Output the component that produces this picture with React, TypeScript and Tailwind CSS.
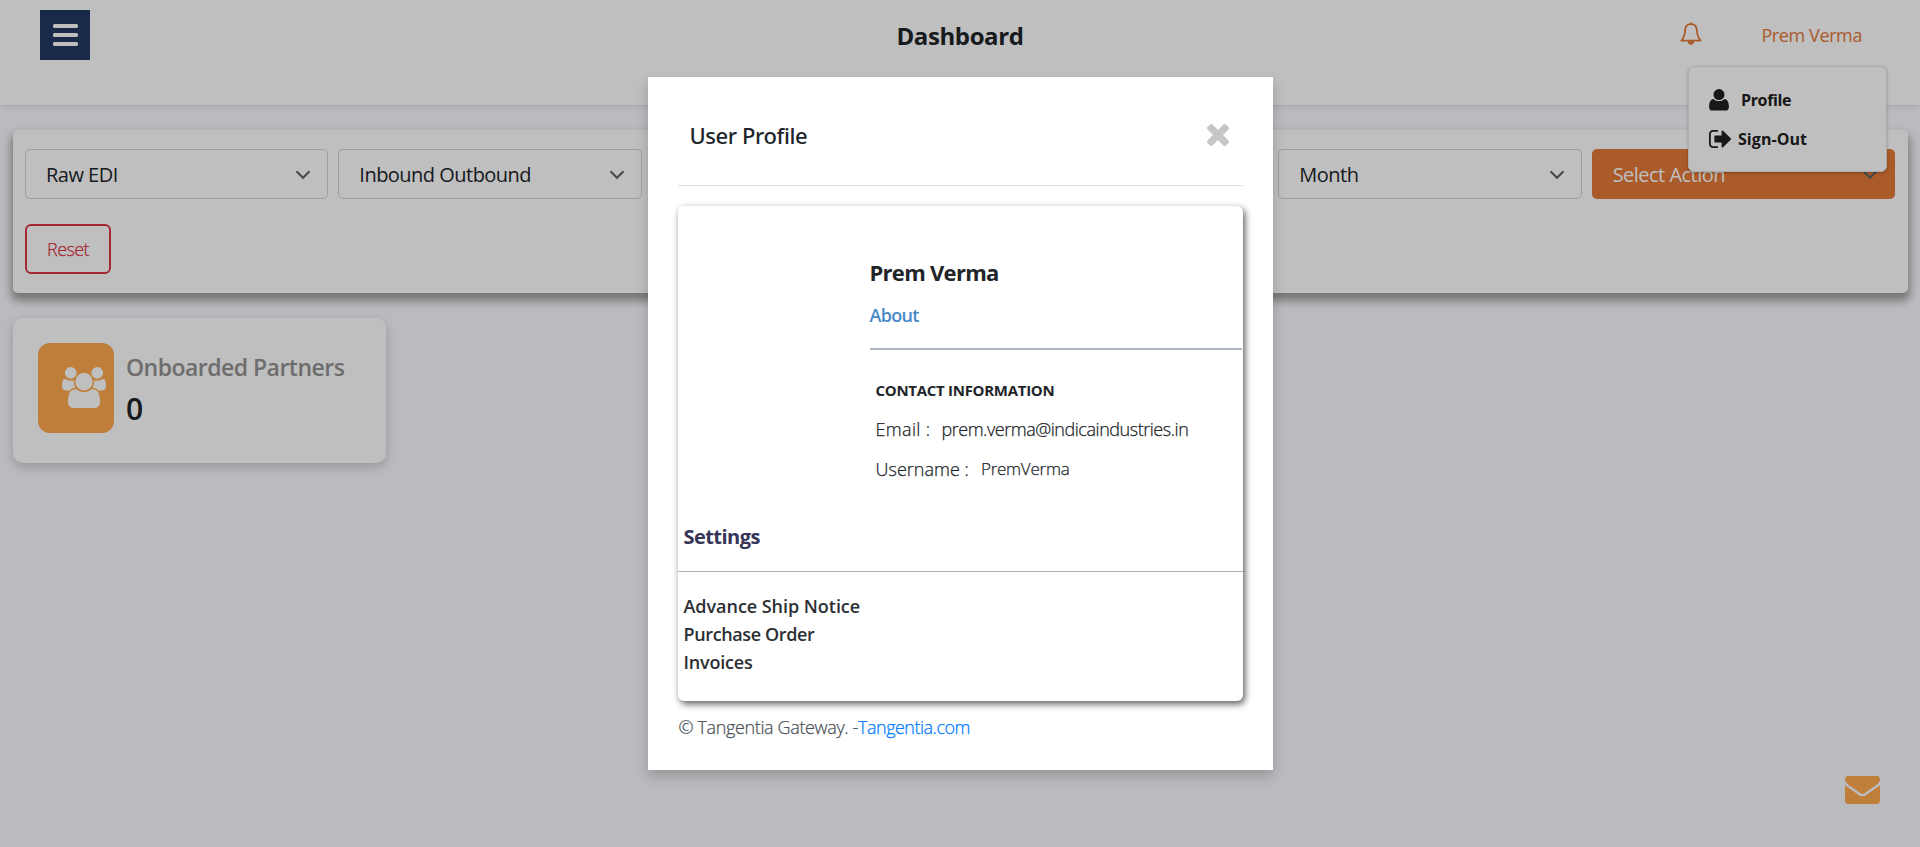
import type { ReactNode } from "react";

type GlyphProps = { d: string; viewBox: string; className: string };

function Glyph({ d, viewBox, className }: GlyphProps) {
  return (
    <svg viewBox={viewBox} className={className} fill="currentColor" preserveAspectRatio="none" aria-hidden="true">
      <path d={d} />
    </svg>
  );
}

const USERS =
  "M593 896q-162 5-265 128h-134q-82 0-138-40.5t-56-118.5q0-353 124-353 6 0 43.5 21t97.5 42.5 119 21.5q67 0 133-23-5 37-5 66 0 139 81 256zm1071 637q0 120-73 189.5t-194 69.5h-874q-121 0-194-69.5t-73-189.5q0-53 3.5-103.5t14-109 26.5-108.5 43-97.5 62-81 85.5-53.5 111.5-20q10 0 43 21.5t73 48 107 48 135 21.5 135-21.5 107-48 73-48 43-21.5q61 0 111.5 20t85.5 53.5 62 81 43 97.5 26.5 108.5 14 109 3.5 103.5zm-1024-1277q0 106-75 181t-181 75-181-75-75-181 75-181 181-75 181 75 75 181zm704 384q0 159-112.5 271.5t-271.5 112.5-271.5-112.5-112.5-271.5 112.5-271.5 271.5-112.5 271.5 112.5 112.5 271.5zm576 225q0 78-56 118.5t-138 40.5h-134q-103-123-265-128 81-117 81-256 0-29-5-66 66 23 133 23 59 0 119-21.5t97.5-42.5 43.5-21q124 0 124 353zm-128-609q0 106-75 181t-181 75-181-75-75-181 75-181 181-75 181 75 75 181z";
const SIGN_OUT =
  "M704 1440q0 4 1 20t.5 26.5-3 23.5-10 19.5-20.5 6.5h-320q-119 0-203.5-84.5t-84.5-203.5v-704q0-119 84.5-203.5t203.5-84.5h320q13 0 22.5 9.5t9.5 22.5q0 4 1 20t.5 26.5-3 23.5-10 19.5-20.5 6.5h-320q-66 0-113 47t-47 113v704q0 66 47 113t113 47h312l11.5 1 11.5 3 8 5.5 7 9 2 13.5zm928-544q0 26-19 45l-544 544q-19 19-45 19t-45-19-19-45v-288h-448q-26 0-45-19t-19-45v-384q0-26 19-45t45-19h448v-288q0-26 19-45t45-19 45 19l544 544q19 19 19 45z";
const TIMES =
  "M1490 1322q0 40-28 68l-136 136q-28 28-68 28t-68-28l-294-294-294 294q-28 28-68 28t-68-28l-136-136q-28-28-28-68t28-68l294-294-294-294q-28-28-28-68t28-68l136-136q28-28 68-28t68 28l294 294 294-294q28-28 68-28t68 28l136 136q28 28 28 68t-28 68l-294 294 294 294q28 28 28 68z";
const ENVELOPE =
  "M1792 710v794q0 66-47 113t-113 47h-1472q-66 0-113-47t-47-113v-794q44 49 101 87 362 246 497 345 57 42 92.5 65.5t94.5 48 110 24.5h2q51 0 110-24.5t94.5-48 92.5-65.5q170-123 498-345 57-39 100-87zm0-294q0 79-49 151t-122 123q-376 261-468 325-10 7-42.5 31t-54 38.8-52 32.5-57.5 27-50 9h-2q-23 0-50-9t-57.5-27-52-32.5-54-38.8-42.5-31q-91-64-262-182.5t-205-142.5q-62-42-117-115.5t-55-136.5q0-78 41.5-130t118.5-52h1472q65 0 112.5 47t47.5 113z";

function Bell() {
  return (
    <svg viewBox="0 0 22 23" className="h-[23px] w-[22px] text-[#e47837]" fill="none" stroke="currentColor" strokeWidth="1.8" strokeLinejoin="round" aria-hidden="true">
      <path d="M11 2.2C7.6 2.2 5.3 4.6 5.1 8.2C4.9 12.6 4.3 15.2 1.4 18.6H20.6C17.7 15.2 17.1 12.6 16.9 8.2C16.7 4.6 14.4 2.2 11 2.2Z" />
      <path d="M9.8 1.8a1.2 1.5 0 0 1 2.4 0Z" fill="currentColor" stroke="none" />
      <path d="M7.8 19.2h6.4c0 2.3-1.3 3.5-3.2 3.5s-3.2-1.2-3.2-3.5Z" fill="currentColor" stroke="none" />
    </svg>
  );
}

function Select({ label, action = false }: { label: ReactNode; action?: boolean }) {
  return (
    <div
      className={
        action
          ? "flex h-[50px] items-center justify-between rounded-[5px] bg-[#e47837] pr-[17px] pl-[21px] text-white"
          : "flex h-[50px] items-center justify-between rounded-[5px] border border-[#ced4da] bg-white pr-[16px] pl-[20px] text-[#212529]"
      }
    >
      <span className="mt-[2px] text-[20px] leading-[30px] tracking-[-0.52px] whitespace-nowrap">{label}</span>
      <svg viewBox="0 0 16 10" className="mt-[2px] h-[10px] w-4" fill="none" stroke="#5b636b" strokeWidth="2.1" aria-hidden="true">
        <path d="M1.5 1.2 8 7.7 14.5 1.2" />
      </svg>
    </div>
  );
}

function UserMenu() {
  return (
    <div className="absolute top-[66px] right-[33px] flex h-[106px] w-[199px] flex-col gap-[9px] rounded-[6px] border border-[#e4e7ec] bg-white pt-[18px] pl-[20px] text-[16px] leading-[30px] font-bold text-[#212121] shadow-[0_1px_3px_rgba(0,0,0,0.25)]">
      <div className="-mt-px flex items-center">
        <svg viewBox="0 0 20 22" className="h-[22px] w-5" fill="currentColor" aria-hidden="true">
          <circle cx="10" cy="5.6" r="5.5" />
          <path d="M4.6 9.9c1.5 1.5 3.3 2.2 5.4 2.2s3.900-.7 5.400-2.200c3.200.2 4.500 3.600 4.500 8 0 2.200-1.300 3.700-3.300 3.700H3.400c-2 0-3.300-1.500-3.300-3.700 0-4.400 1.300-7.800 4.500-8Z" />
        </svg>
        <span className="ml-[12px] pt-px tracking-[-0.35px]">Profile</span>
      </div>
      <div className="flex items-center">
        <Glyph d={SIGN_OUT} viewBox="64 256 1568 1280" className="h-[18px] w-[22px]" />
        <span className="ml-[7px] tracking-[0.05px]">Sign-Out</span>
      </div>
    </div>
  );
}

function Header() {
  return (
    <header className="relative z-10 grid h-[105px] grid-cols-[1fr_auto_1fr] items-start bg-white shadow-[0_2px_6px_rgba(0,0,0,0.1)]">
      <button className="mt-[10px] ml-[40px] flex h-[50px] w-[50px] flex-col items-center justify-center gap-[5px] bg-[#203763] pl-[1px]">
        <span className="h-1 w-[25px] rounded-[1.5px] bg-white" />
        <span className="h-1 w-[25px] rounded-[1.5px] bg-white" />
        <span className="h-1 w-[25px] rounded-[1.5px] bg-white" />
      </button>
      <h1 className="mt-[20px] text-[24px] leading-[32px] font-bold tracking-[-0.4px] text-[#212529]">Dashboard</h1>
      <div className="mt-[20px] mr-[58px] flex items-start justify-end gap-[59px]">
        <div className="mt-[2px]">
          <Bell />
        </div>
        <span className="text-[18px] leading-[30px] tracking-[-0.39px] text-[#e47837]">Prem Verma</span>
      </div>
      <UserMenu />
    </header>
  );
}

function Filters() {
  return (
    <section className="mr-[12px] ml-[13px] mt-[25px] h-[163px] rounded-[5px] bg-white pr-[13px] pl-[12px] pt-[19px] shadow-[0_6px_8px_2px_#a0a0a0]">
      <div className="grid grid-cols-6 gap-[10px]">
        <Select label="Raw EDI" />
        <Select label="Inbound Outbound" />
        <Select label="" />
        <Select label="" />
        <Select label="Month" />
        <Select label="Select Action" action />
      </div>
      <button className="mt-[25px] flex h-[50px] w-[86px] items-center justify-center rounded-[6px] border-2 border-[#dc3545] text-[18px] leading-[30px] font-light tracking-[-0.6px] text-[#dc3545] [-webkit-text-stroke:0.25px]">
        Reset
      </button>
    </section>
  );
}

function PartnersCard() {
  return (
    <section className="mt-[25px] ml-[13px] flex h-[145px] w-[373px] rounded-[10px] bg-white pt-[25px] pl-[25px] shadow-[0_4px_12px_rgba(0,0,0,0.2)]">
      <div className="flex h-[90px] w-[76px] items-start rounded-[12px] bg-[#ffa94d] pt-[24px] pl-[24px] text-white">
        <Glyph d={USERS} viewBox="0 0 1920 1792" className="h-[41px] w-[44px]" />
      </div>
      <div className="ml-[12px] pt-[8px]">
        <div className="text-[23px] leading-[32px] font-semibold tracking-[-0.52px] text-[#929292]">Onboarded Partners</div>
        <div className="mt-[6px] text-[30px] leading-[40px] font-semibold text-[#212529]">0</div>
      </div>
    </section>
  );
}

function ProfileModal() {
  return (
    <div className="flex h-[693px] w-[625px] flex-col bg-white px-[30px] text-[#212529] shadow-[0_6px_12px_rgba(0,0,0,0.2)]">
      <div className="flex h-[109px] items-start justify-between border-b border-[#dee2e6] pr-[14px] pl-[12px]">
        <h2 className="mt-[43px] font-['Noto_Sans',sans-serif] text-[22px] leading-[30px] font-medium tracking-[-0.41px]">User Profile</h2>
        <Glyph d={TIMES} viewBox="302 366 1188 1188" className="mt-[47px] h-[22px] w-[22px] text-[#c6c6c6]" />
      </div>
      <div className="mt-[20px] h-[495px] w-[565px] rounded-[6px] bg-white shadow-[2px_3px_7px_rgba(0,0,0,0.65)]">
        <div className="ml-[192px] h-[315px] pt-[51px] pr-[1px]">
          <div className="text-[22px] leading-[30px] font-bold tracking-[-0.72px]">Prem Verma</div>
          <div className="mt-[13px] text-[18px] leading-[30px] font-semibold tracking-[-0.7px] text-[#4788c7]">About</div>
          <div className="mt-[18px] h-[2px] bg-[#a9b4bf]" />
          <div className="flex flex-col gap-[10px] pt-[25px] pl-[6px] whitespace-nowrap">
            <div className="text-[15px] leading-[30px] font-bold tracking-[-0.29px]">CONTACT INFORMATION</div>
            <div className="-mt-px flex text-[18px] leading-[30px] font-light [-webkit-text-stroke:0.25px]">
              <span className="tracking-[0.35px]">Email :</span>
              <span className="ml-[11px] tracking-[-0.46px]">prem.verma@indicaindustries.in</span>
            </div>
            <div className="flex text-[18px] leading-[30px] font-light [-webkit-text-stroke:0.25px]">
              <span className="tracking-[0.03px]">Username :</span>
              <span className="ml-[12px] text-[17px] tracking-[-0.25px]">PremVerma</span>
            </div>
          </div>
        </div>
        <div className="h-[51px] border-b border-[#a9b4b9] pt-px pl-[6px] text-[20px] leading-[30px] font-bold tracking-[-0.55px] text-[#363558]">Settings</div>
        <div className="pt-[20px] pl-[6px] text-[18px] leading-[28px] font-semibold text-[#2b2f33]">
          <div className="tracking-[-0.04px]">Advance Ship Notice</div>
          <div className="tracking-[-0.38px]">Purchase Order</div>
          <div className="tracking-[-0.2px]">Invoices</div>
        </div>
      </div>
      <div className="mt-[11px] pl-px text-[18px] leading-[30px] font-light whitespace-nowrap text-[#4c535a] [-webkit-text-stroke:0.25px]">
        <span className="tracking-[-0.36px]">© Tangentia Gateway. -</span>
        <span className="tracking-[-0.5px] text-[#007bff]">Tangentia.com</span>
      </div>
    </div>
  );
}

export default function App() {
  return (
    <div className="relative h-[847px] w-full overflow-hidden bg-[#f8fafe] font-['Open_Sans',sans-serif]">
      <Header />
      <Filters />
      <PartnersCard />
      <div className="absolute right-[40px] bottom-[43px] text-[#ffa94d]">
        <Glyph d={ENVELOPE} viewBox="0 256 1792 1408" className="h-[28px] w-[35px]" />
      </div>
      <div className="absolute inset-0 z-20 flex items-start justify-center bg-black/25 pt-[77px]">
        <ProfileModal />
      </div>
    </div>
  );
}
